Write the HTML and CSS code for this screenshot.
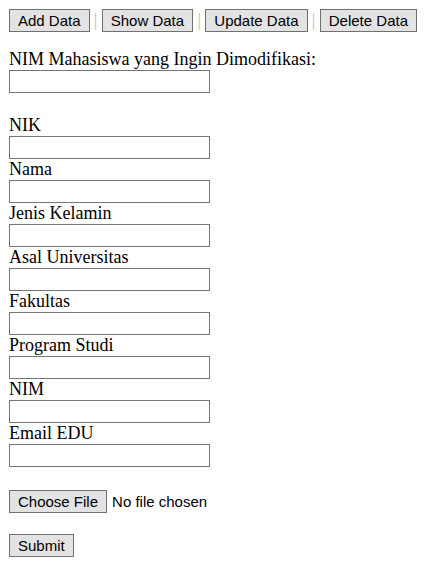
FILE: index.html
```html
<!DOCTYPE html>
<html>
<head>
<meta charset="utf-8">
<link rel="stylesheet" href="styles.css">
</head>
<body>
<nav class="menu">
  <button class="btn" type="button">Add Data</button><span class="sep">|</span><button class="btn" type="button">Show Data</button><span class="sep">|</span><button class="btn" type="button">Update Data</button><span class="sep">|</span><button class="btn" type="button">Delete Data</button>
</nav>
<form class="form">
  <div class="field target">
    <label class="label">NIM Mahasiswa yang Ingin Dimodifikasi:</label>
    <input class="text" type="text">
  </div>
  <div class="fields">
    <div class="field"><label class="label">NIK</label><input class="text" type="text"></div>
    <div class="field"><label class="label">Nama</label><input class="text" type="text"></div>
    <div class="field"><label class="label">Jenis Kelamin</label><input class="text" type="text"></div>
    <div class="field"><label class="label">Asal Universitas</label><input class="text" type="text"></div>
    <div class="field"><label class="label">Fakultas</label><input class="text" type="text"></div>
    <div class="field"><label class="label">Program Studi</label><input class="text" type="text"></div>
    <div class="field"><label class="label">NIM</label><input class="text" type="text"></div>
    <div class="field"><label class="label">Email EDU</label><input class="text" type="text"></div>
  </div>
  <div class="file">
    <button class="btn" type="button">Choose File</button><span class="file-name">No file chosen</span>
  </div>
  <div class="submit-row">
    <button class="btn" type="submit">Submit</button>
  </div>
</form>
</body>
</html>
```
FILE: styles.css
```css
html, body {
  margin: 0;
  background: #ffffff;
}
body {
  padding: 9px 9px;
  font-family: "Liberation Serif", "Times New Roman", serif;
  font-size: 18px;
  color: #000;
}
.menu {
  display: flex;
  align-items: center;
  height: 23px;
}
.sep {
  width: 12.6px;
  text-align: center;
  color: #c9bf9f;
  font-size: 18px;
  line-height: 23px;
}
.btn {
  height: 23px;
  margin: 0;
  padding: 0 8px;
  border: 1px solid #707070;
  background: #e3e3e3;
  border-radius: 0;
  font-family: "Liberation Sans", Arial, sans-serif;
  font-size: 15px;
  color: #000;
  line-height: 21px;
  white-space: nowrap;
}
.form {
  display: flex;
  flex-direction: column;
  margin-top: 20px;
}
.field {
  display: flex;
  flex-direction: column;
  align-items: flex-start;
}
.label {
  height: 18px;
  line-height: 15px;
  white-space: nowrap;
}
.text {
  box-sizing: border-box;
  width: 201px;
  height: 23px;
  margin: 0;
  padding: 1px 2px;
  border: 1px solid #767676;
  background: #fff;
  font-family: "Liberation Sans", Arial, sans-serif;
  font-size: 15px;
}
.fields {
  display: flex;
  flex-direction: column;
  gap: 3px;
  margin-top: 25px;
}
.file {
  display: flex;
  align-items: center;
  margin-top: 23px;
}
.file-name {
  margin-left: 5px;
  font-family: "Liberation Sans", Arial, sans-serif;
  font-size: 15px;
}
.submit-row {
  display: flex;
  margin-top: 21px;
}
```
